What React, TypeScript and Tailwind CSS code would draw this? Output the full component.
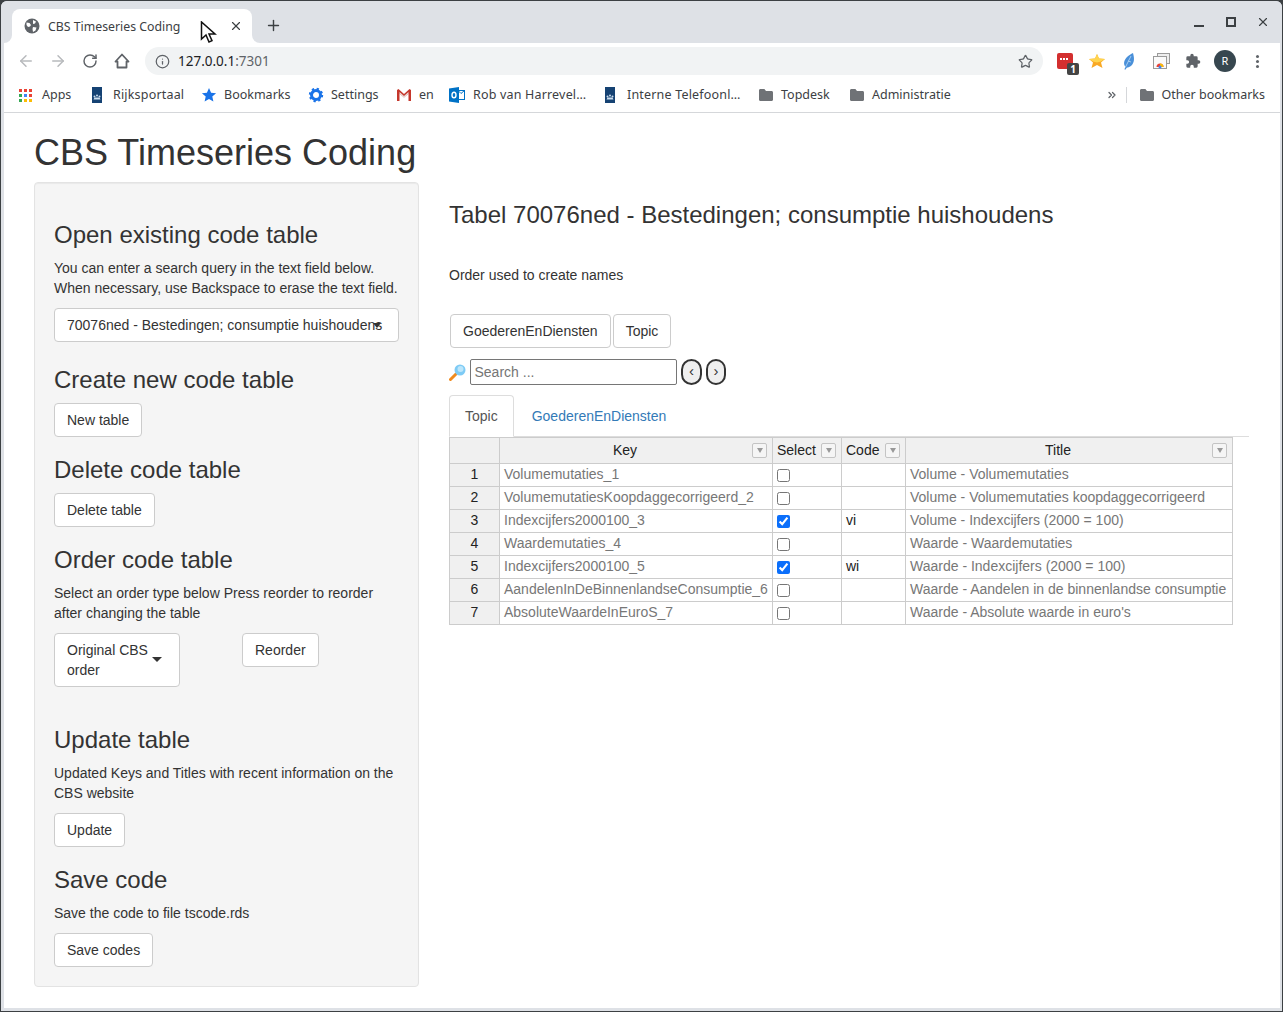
import React from "react";
import { ArrowLeft, ArrowRight, RotateCw, Info, Star, Plus, X, ChevronsRight } from "lucide-react";

const uiFont = "font-['Noto_Sans',sans-serif]";

const Folder = () => (
    <svg width="16" height="16" viewBox="0 0 16 16" className="shrink-0">
        <path d="M1 3.500C1 2.700 1.600 2 2.400 2h4l1.600 2h5.600c.8 0 1.400.7 1.400 1.500v7c0 .8-.6 1.500-1.400 1.500H2.400C1.600 14 1 13.300 1 12.500z" fill="#6f7276" />
    </svg>
);

const Rijks = () => (
    <svg width="10" height="16" viewBox="0 0 10 16" className="shrink-0">
        <rect width="10" height="16" fill="#154273" />
        <circle cx="2.500" cy="9.500" r="1" fill="#cde" />
        <circle cx="5" cy="8.500" r="1" fill="#cde" />
        <circle cx="7.500" cy="9.500" r="1" fill="#cde" />
        <path d="M1.500 12.500l1-2h5l1 2z" fill="#cde" />
    </svg>
);

const AppsIcon = () => {
    const colors = ["#ea4335", "#ea4335", "#ea4335", "#34a853", "#4285f4", "#ea4335", "#34a853", "#fbbc05", "#fbbc05"];
    return (
        <div className="grid grid-cols-3 gap-[2px] w-[13px] h-[13px] shrink-0">
            {colors.map((c, i) => (
                <div key={i} className="w-[3px] h-[3px]" style={{ background: c }} />
            ))}
        </div>
    );
};

const Bookmark = ({ icon, label, width, wide }: { icon: React.ReactNode; label: string; width: string; wide?: boolean }) => (
    <div className={`flex items-center ${width}`}>
        {icon}
        <span className={`text-[12.5px] text-[#3c4043] whitespace-nowrap ${wide ? "tracking-[0.18px]" : ""}`}>{label}</span>
    </div>
);

const ExtSlot = ({ children }: { children: React.ReactNode }) => (
    <div className="w-[32px] h-[28px] flex items-center justify-center shrink-0">{children}</div>
);

const ChromeBar = () => (
    <div className={`${uiFont} shrink-0`}>
        {/* tab strip */}
        <div className="h-[42px] bg-[#dee1e6] flex items-end pl-[11px] relative">
            <div className="relative w-[240px] h-[34px] bg-white rounded-t-[8px] flex items-center pl-[12px] pr-[9px]">
                <div className="absolute -left-[8px] bottom-0 w-[8px] h-[8px] bg-white">
                    <div className="w-[8px] h-[8px] bg-[#dee1e6] rounded-br-[8px]" />
                </div>
                <div className="absolute -right-[8px] bottom-0 w-[8px] h-[8px] bg-white">
                    <div className="w-[8px] h-[8px] bg-[#dee1e6] rounded-bl-[8px]" />
                </div>
                <svg width="16" height="16" viewBox="0 0 16 16" className="shrink-0">
                    <circle cx="8" cy="8" r="7.500" fill="#5f6368" />
                    <path d="M2.500 4.500l3 .5 1.500 2-1 1.500-2 .5-1.500-2zM9 2l3 1.500-1 2-2 .5zM9 9l3.500.5-1 3-2.500 1.500-.5-3z" fill="#fff" />
                </svg>
                <span className="ml-[8px] mt-[2px] text-[12.3px] text-[#3c4043] whitespace-nowrap">CBS Timeseries Coding</span>
                <X size={14} strokeWidth={2} className="ml-auto text-[#3c4043]" />
            </div>
            <Plus size={17} strokeWidth={2} className="ml-[13px] mb-[9px] text-[#3c4043]" />
            <div className="ml-auto self-start flex pr-[3px] pt-[14px] text-[#3c4043]">
                <div className="w-[32px] h-[14px] flex items-end justify-center">
                    <div className="w-[10px] h-[2px] bg-[#3c4043] mb-[2px]" />
                </div>
                <div className="w-[32px] h-[14px] flex items-center justify-center">
                    <div className="w-[10px] h-[10px] border-2 border-[#3c4043]" />
                </div>
                <div className="w-[32px] h-[14px] flex items-center justify-center">
                    <X size={14} strokeWidth={2} />
                </div>
            </div>
            <svg width="17" height="22" viewBox="0 0 17 22" className="absolute left-[199px] top-[20px]">
                <path d="M1.500 1v17l4.500-4 3 7 3-1.300-3-6.700h6z" fill="#fff" stroke="#111" strokeWidth="1.500" />
            </svg>
        </div>
        <div className="ml-[3px] mr-[2px] bg-white">
            {/* toolbar */}
            <div className="h-[38px] pb-[2px] flex items-center pl-[13px]">
                <ArrowLeft size={18} className="text-[#b8babd]" />
                <ArrowRight size={18} className="text-[#b8babd] ml-[14px]" />
                <RotateCw size={16} strokeWidth={2.200} className="text-[#5f6368] ml-[15px]" />
                <svg width="18" height="18" viewBox="0 0 18 18" className="ml-[15px]">
                    <path d="M9 2.500L2.500 9.500h2v6h9v-6h2z" fill="none" stroke="#5f6368" strokeWidth="1.800" strokeLinejoin="round" />
                </svg>
                <div className="ml-[14px] w-[898px] h-[28px] shrink-0 rounded-full bg-[#f1f3f4] flex items-center pl-[10px] pr-[10px]">
                    <Info size={15} className="text-[#5f6368]" />
                    <span className="ml-[8px] text-[13.5px] text-[#202124]">127.0.0.1<span className="text-[#5f6368]">:7301</span></span>
                    <Star size={15} strokeWidth={2} className="ml-auto text-[#5f6368]" />
                </div>
                <div className="ml-[6px] flex">
                    <ExtSlot>
                        <div className="relative w-[16px] h-[16px] bg-[#d32f2f] rounded-[2px]">
                            <div className="absolute left-[3px] top-[5px] flex gap-[1px]">
                                <div className="w-[2px] h-[2px] bg-white" />
                                <div className="w-[2px] h-[2px] bg-white" />
                                <div className="w-[2px] h-[2px] bg-white" />
                            </div>
                            <span className="absolute left-[10px] top-[10px] w-[12px] h-[12px] bg-[#444] rounded-[2px] text-white text-[10px] leading-[12px] text-center font-bold">1</span>
                        </div>
                    </ExtSlot>
                    <ExtSlot>
                        <svg width="18" height="16" viewBox="0 0 18 16">
                            <path d="M9 1l2 4.500 6 .5-4 3.500 1.500 5.500L9 12l-5.500 3L5 9.500 1 6l6-.5z" fill="#f9a825" />
                            <path d="M9 1l2 4.500 6 .5-4 2.500L9 9.500 5 8.500 1 6l6-.5z" fill="#ffd54f" />
                        </svg>
                    </ExtSlot>
                    <ExtSlot>
                        <svg width="14" height="19" viewBox="0 0 14 19">
                            <path d="M11 1C12 5 13 9 10 13c-2 2-4 2.500-5 2.500L3 18l-.5-1 1-2C1 12 2 8 5 5c2-2 4-3 6-4z" fill="#4a90d9" />
                            <path d="M9 4L3.500 15M6 9l3 1" stroke="#bcdcf5" strokeWidth=".8" fill="none" />
                        </svg>
                    </ExtSlot>
                    <ExtSlot>
                        <svg width="17" height="16" viewBox="0 0 17 16">
                            <rect x="4.500" y=".5" width="12" height="10" fill="#eee" stroke="#9a9a9a" />
                            <rect x=".5" y="3.500" width="13" height="12" fill="#fafafa" stroke="#9a9a9a" />
                            <path d="M3.500 14a3.500 3.500 0 0 1 7 0z" fill="#ea4335" />
                            <path d="M7 14v-3.500a3.500 3.500 0 0 1 3.500 3.500z" fill="#fbbc05" />
                            <circle cx="7" cy="14" r="1.500" fill="#4285f4" />
                        </svg>
                    </ExtSlot>
                    <ExtSlot>
                        <svg width="16" height="16" viewBox="0 0 24 24">
                            <path d="M20.500 11H19V7a2 2 0 0 0-2-2h-4V3.500a2.500 2.500 0 0 0-5 0V5H4a2 2 0 0 0-2 2v3.800h1.500a2.700 2.700 0 0 1 0 5.400H2V20a2 2 0 0 0 2 2h3.800v-1.500a2.700 2.700 0 0 1 5.400 0V22H17a2 2 0 0 0 2-2v-4h1.500a2.500 2.500 0 0 0 0-5z" fill="#5f6368" />
                        </svg>
                    </ExtSlot>
                    <ExtSlot>
                        <div className="w-[22px] h-[22px] rounded-full bg-[#37474f] text-white text-[11px] leading-[22px] text-center">R</div>
                    </ExtSlot>
                    <ExtSlot>
                        <div className="flex flex-col gap-[2px]">
                            <div className="w-[3px] h-[3px] rounded-full bg-[#5f6368]" />
                            <div className="w-[3px] h-[3px] rounded-full bg-[#5f6368]" />
                            <div className="w-[3px] h-[3px] rounded-full bg-[#5f6368]" />
                        </div>
                    </ExtSlot>
                </div>
            </div>
            {/* bookmarks */}
            <div className="h-[32px] pb-[3px] border-b border-[#d5d7da] flex items-center pl-[15px] pr-[15px]">
                <Bookmark width="w-[73px]" label="Apps" icon={<div className="mr-[10px]"><AppsIcon /></div>} />
                <Bookmark width="w-[109px]" wide label="Rijksportaal" icon={<div className="mr-[11px]"><Rijks /></div>} />
                <Bookmark width="w-[107px]" label="Bookmarks" icon={<svg width="16" height="16" viewBox="0 0 16 16" className="mr-[7px]"><path d="M8 1l2.100 4.700 5 .5-3.800 3.300 1.100 5L8 11.900 3.600 14.500l1.100-5L.9 6.200l5-.5z" fill="#1a73e8" /></svg>} />
                <Bookmark width="w-[88px]" label="Settings" icon={<svg width="16" height="16" viewBox="0 0 16 16" className="mr-[7px]"><circle cx="8" cy="8" r="4.500" fill="none" stroke="#1a73e8" strokeWidth="3" /><circle cx="8" cy="8" r="6" fill="none" stroke="#1a73e8" strokeWidth="2.400" strokeDasharray="2.200 2.500" /></svg>} />
                <Bookmark width="w-[53px]" label="en" icon={<svg width="16" height="14" viewBox="0 0 16 14" className="mr-[7px]"><path d="M1 13V2l1.500-1L8 6l5.500-5L15 2v11h-2.500V5.500L8 9.500 3.500 5.500V13z" fill="#c5372c" /><path d="M3.500 5.500L8 9.500l4.500-4V4L8 8 3.500 4z" fill="#e8e0de" /></svg>} />
                <Bookmark width="w-[156px]" wide label="Rob van Harrevel…" icon={<svg width="16" height="16" viewBox="0 0 16 16" className="mr-[8px]"><rect x="9" y="3.500" width="6.500" height="9" fill="#fff" stroke="#0072c6" /><path d="M9 3.500l3 3 3.500-3" fill="none" stroke="#0072c6" /><path d="M0 1.500L10 0v16L0 14.500z" fill="#0072c6" /><ellipse cx="5" cy="8" rx="2" ry="2.800" fill="none" stroke="#fff" strokeWidth="1.400" /></svg>} />
                <Bookmark width="w-[153px]" wide label="Interne Telefoonl…" icon={<div className="mr-[12px]"><Rijks /></div>} />
                <Bookmark width="w-[91px]" label="Topdesk" icon={<div className="mr-[7px]"><Folder /></div>} />
                <Bookmark width="w-auto" label="Administratie" icon={<div className="mr-[7px]"><Folder /></div>} />
                <ChevronsRight size={12} strokeWidth={2.500} className="ml-auto text-[#5f6368]" />
                <div className="w-px h-[16px] bg-[#d5d7da] ml-[8px] mr-[12px]" />
                <div className="mr-[7px]"><Folder /></div>
                <span className="text-[12.5px] text-[#3c4043] whitespace-nowrap">Other bookmarks</span>
            </div>
        </div>
    </div>
);

const btn = "inline-block h-[34px] px-[12px] leading-[32px] bg-white border border-[#ccc] rounded-[4px] text-[14px] text-[#333]";

const SideTitle = ({ children, top }: { children: React.ReactNode; top: string }) => (
    <h3 className={`${top} mb-[10px] text-[24px] leading-[26px] font-normal text-[#333]`}>{children}</h3>
);

const Sidebar = () => (
    <div className="w-[385px] h-[805px] shrink-0 bg-[#f5f5f5] border border-[#e3e3e3] rounded-[4px] p-[19px] shadow-[inset_0_1px_1px_rgba(0,0,0,0.05)]">
        <SideTitle top="mt-[20px]">Open existing code table</SideTitle>
        <p className="text-[14px] leading-[20px] mb-[10px]">You can enter a search query in the text field below.<br />When necessary, use Backspace to erase the text field.</p>
        <div className="relative h-[34px] bg-white border border-[#ccc] rounded-[4px] pl-[12px] leading-[32px] text-[14px] whitespace-nowrap overflow-hidden">
            70076ned - Bestedingen; consumptie huishoudens
            <div className="absolute right-[17px] top-[14px] w-0 h-0 border-x-[4px] border-x-transparent border-t-[5px] border-t-[#333]" />
        </div>
        <SideTitle top="mt-[25px]">Create new code table</SideTitle>
        <div className={btn}>New table</div>
        <SideTitle top="mt-[20px]">Delete code table</SideTitle>
        <div className={btn}>Delete table</div>
        <SideTitle top="mt-[20px]">Order code table</SideTitle>
        <p className="text-[14px] leading-[20px] mb-[10px]">Select an order type below Press reorder to reorder<br />after changing the table</p>
        <div className="flex items-start h-[54px]">
            <div className="relative w-[126px] h-[54px] bg-white border border-[#ccc] rounded-[4px] pl-[12px] pt-[6px] text-[14px] leading-[20px]">
                Original CBS<br />order
                <div className="absolute left-[97px] top-[23px] w-0 h-0 border-x-[5px] border-x-transparent border-t-[5px] border-t-[#333]" />
            </div>
            <div className={`${btn} ml-[62px]`}>Reorder</div>
        </div>
        <SideTitle top="mt-[40px]">Update table</SideTitle>
        <p className="text-[14px] leading-[20px] mb-[10px]">Updated Keys and Titles with recent information on the<br />CBS website</p>
        <div className={btn}>Update</div>
        <SideTitle top="mt-[20px]">Save code</SideTitle>
        <p className="text-[14px] leading-[20px] mb-[10px]">Save the code to file tscode.rds</p>
        <div className={btn}>Save codes</div>
    </div>
);

const rows = [
    { key: "Volumemutaties_1", checked: false, code: "", title: "Volume - Volumemutaties" },
    { key: "VolumemutatiesKoopdaggecorrigeerd_2", checked: false, code: "", title: "Volume - Volumemutaties koopdaggecorrigeerd" },
    { key: "Indexcijfers2000100_3", checked: true, code: "vi", title: "Volume - Indexcijfers (2000 = 100)" },
    { key: "Waardemutaties_4", checked: false, code: "", title: "Waarde - Waardemutaties" },
    { key: "Indexcijfers2000100_5", checked: true, code: "wi", title: "Waarde - Indexcijfers (2000 = 100)" },
    { key: "AandelenInDeBinnenlandseConsumptie_6", checked: false, code: "", title: "Waarde - Aandelen in de binnenlandse consumptie" },
    { key: "AbsoluteWaardeInEuroS_7", checked: false, code: "", title: "Waarde - Absolute waarde in euro's" },
];

const FilterBtn = () => (
    <span className="absolute right-[5px] top-[5px] w-[15px] h-[15px] bg-[#f5f5f5] border border-[#c4c4c4] rounded-[2px] flex items-center justify-center">
        <span className="w-0 h-0 border-x-[3px] border-x-transparent border-t-[5px] border-t-[#999]" />
    </span>
);

const Head = ({ label, left }: { label: string; left?: boolean }) => (
    <th className={`relative h-[26px] p-0 pb-[2px] bg-[#f0f0f0] border border-[#ccc] font-normal text-[14px] text-[#222] ${left ? "text-left pl-[4px]" : "text-center pr-[22px]"}`}>
        {label}
        <FilterBtn />
    </th>
);

const CodeTable = () => (
    <table className="table-fixed border-collapse w-[783px] text-[14px] leading-[20px] relative">
        <colgroup>
            <col className="w-[50px]" />
            <col className="w-[273px]" />
            <col className="w-[69px]" />
            <col className="w-[64px]" />
            <col className="w-[327px]" />
        </colgroup>
        <thead>
            <tr>
                <th className="h-[26px] bg-[#f0f0f0] border border-[#ccc]" />
                <Head label="Key" />
                <Head label="Select" left />
                <Head label="Code" left />
                <Head label="Title" />
            </tr>
        </thead>
        <tbody>
            {rows.map((r, i) => (
                <tr key={r.key} className="h-[23px]">
                    <td className="p-0 pb-[2px] bg-[#f0f0f0] border border-[#ccc] text-center text-[#222]">{i + 1}</td>
                    <td className="pt-0 pb-[2px] px-[4px] bg-white border border-[#ccc] text-[#777] whitespace-nowrap overflow-hidden">{r.key}</td>
                    <td className="py-0 px-[4px] bg-white border border-[#ccc]">
                        <input type="checkbox" readOnly checked={r.checked} className="block w-[13px] h-[13px] accent-[#0b6ffb]" />
                    </td>
                    <td className="pt-0 pb-[2px] px-[4px] bg-white border border-[#ccc] text-[#222]">{r.code}</td>
                    <td className="pt-0 pb-[2px] px-[4px] bg-white border border-[#ccc] text-[#777] whitespace-nowrap overflow-hidden">{r.title}</td>
                </tr>
            ))}
        </tbody>
    </table>
);

const Main = () => (
    <div className="w-[800px]">
        <h3 className="mt-[20px] text-[24px] leading-[26px] font-normal text-[#333]">Tabel 70076ned - Bestedingen; consumptie huishoudens</h3>
        <p className="mt-[37px] text-[14px] leading-[20px]">Order used to create names</p>
        <div className="mt-[29px] ml-px flex gap-[2px]">
            <div className={btn}>GoederenEnDiensten</div>
            <div className={btn}>Topic</div>
        </div>
        <div className="mt-[11px] flex items-center h-[26px]">
            <svg width="17" height="17" viewBox="0 0 17 17" className="shrink-0">
                <path d="M7 10l-5.500 5.500" stroke="#f08a1d" strokeWidth="3" strokeLinecap="round" />
                <circle cx="11" cy="6" r="5.500" fill="#7ecbf5" />
                <circle cx="11.500" cy="5" r="3" fill="#bde6fb" />
            </svg>
            <div className="ml-[4px] w-[207px] h-[26px] border border-[#767676] rounded-[2px] bg-white pl-[3.500px] text-[14px] leading-[24px] text-[#757575]">Search ...</div>
            <div className="ml-[4px] w-[21px] h-[26px] rounded-full bg-[#efefef] border-2 border-[#333] text-[15px] leading-[20px] text-center">‹</div>
            <div className="ml-[4px] w-[20px] h-[26px] rounded-full bg-[#efefef] border-2 border-[#333] text-[15px] leading-[20px] text-center">›</div>
        </div>
        <div className="mt-[10px] h-[42px] flex border-b border-[#ddd]">
            <div className="h-[42px] px-[15px] bg-white border border-[#ddd] border-b-white rounded-t-[4px] text-[14px] leading-[40px] text-[#555]">Topic</div>
            <div className="h-[41px] px-[18px] text-[14px] leading-[42px] text-[#337ab7]">GoederenEnDiensten</div>
        </div>
        <CodeTable />
    </div>
);

export default function App() {
    return (
        <div className="w-[1283px] h-[1012px] overflow-hidden bg-[#3c4043] p-px font-['Liberation_Sans',sans-serif] text-[#333]">
            <div className="h-[1010px] flex flex-col bg-[#dee1e6] rounded-t-[6px] overflow-hidden">
                <ChromeBar />
                <div className="flex-1 ml-[3px] mr-[2px] mb-[3px] bg-white pl-[30px]">
                    <h1 className="pt-[20px] h-[59px] text-[36px] leading-[39px] font-normal text-[#333]">CBS Timeseries Coding</h1>
                    <div className="mt-[10px] flex gap-[30px]">
                        <Sidebar />
                        <Main />
                    </div>
                </div>
            </div>
        </div>
    );
}
